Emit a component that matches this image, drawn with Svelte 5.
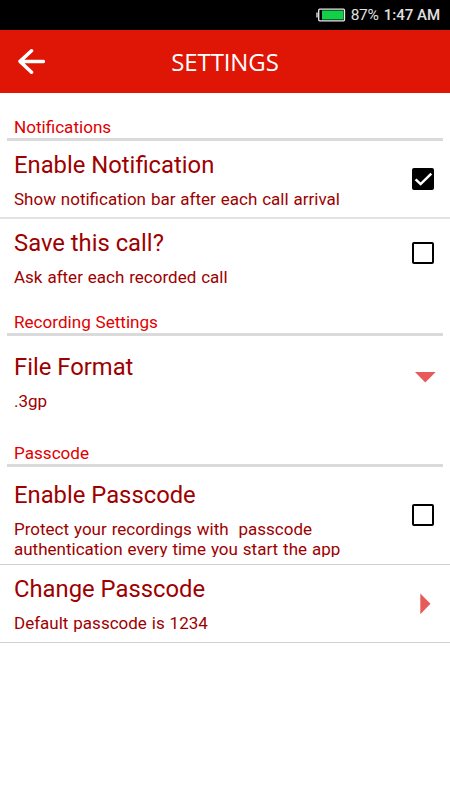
<script>
    let groups = $state([
        {
            name: 'Notifications',
            size: 'first',
            rows: [
                {title: 'Enable Notification', text: 'Show notification bar after each call arrival', kind: 'check', checked: true, size: 'line'},
                {title: 'Save this call?', text: 'Ask after each recorded call', kind: 'check', checked: false, size: 'plain'}
            ]
        },
        {
            name: 'Recording Settings',
            size: 'second',
            rows: [
                {title: 'File Format', text: '.3gp', kind: 'down', size: 'format'}
            ]
        },
        {
            name: 'Passcode',
            size: 'third',
            rows: [
                {title: 'Enable Passcode', text: 'Protect your recordings with  passcode\nauthentication every time you start the app', kind: 'check', checked: false, size: 'tall'},
                {title: 'Change Passcode', text: 'Default passcode is 1234', kind: 'right', size: 'last'}
            ]
        }
    ])
</script>

<main>
    <div class="status">
        <svg class="battery" width="30" height="14" viewBox="0 0 30 14">
            <path d="M1 4.5v5" stroke="#ddd" stroke-width="1.4" />
            <rect x="2.7" y="1.2" width="25.8" height="11.6" rx="1" fill="#000" stroke="#eee" stroke-width="1.3" />
            <rect x="6" y="2.5" width="21.5" height="9" fill="#13cf4a" />
        </svg>
        <span class="percent">87%</span>
        <span class="time">1:47 AM</span>
    </div>

    <header>
        <button class="back" aria-label="back">
            <svg width="28" height="28" viewBox="0 0 28 28">
                <path d="M26.3 13.4H3M14.5 2.8L3 13.4l11.5 10.8" fill="none" stroke="#fff" stroke-width="3.5" stroke-linecap="round" stroke-linejoin="round" />
            </svg>
        </button>
        <h1>SETTINGS</h1>
    </header>

    {#each groups as group}
        <h2 class={group.size}>{group.name}</h2>
        {#each group.rows as row}
            <div class="row {row.size}">
                <div class="info">
                    <h3>{row.title}</h3>
                    <p>{row.text}</p>
                </div>
                {#if row.kind === 'check'}
                    <button class="check" class:checked={row.checked} aria-label={row.title} onclick={() => row.checked = !row.checked}>
                        {#if row.checked}
                            <svg width="23" height="23" viewBox="0 0 23 23">
                                <path d="M3.6 11.3l5 4.8L19.3 5.6" fill="none" stroke="#fff" stroke-width="2.5" />
                            </svg>
                        {/if}
                    </button>
                {:else if row.kind === 'down'}
                    <svg class="arrow" width="22" height="22" viewBox="0 0 22 22">
                        <path d="M1 6h20.7L11.3 16.5z" fill="#e85a5a" />
                    </svg>
                {:else}
                    <svg class="arrow" width="22" height="22" viewBox="0 0 22 22">
                        <path d="M6.3 .4v20.8L16.5 10.8z" fill="#e85a5a" />
                    </svg>
                {/if}
            </div>
        {/each}
    {/each}
</main>

<style>
    :global(body){
        margin: 0;
        background: #fff;
    }

    main{
        height: 800px;
        overflow: hidden;
        background: #fff;
        font-family: Roboto, sans-serif;
    }

    h1, h2, h3, p{
        margin: 0;
        font-weight: 400;
    }

    button{
        padding: 0;
        border: 0;
        background: none;
    }

    svg{
        display: block;
    }

    .status{
        display: flex;
        align-items: center;
        justify-content: flex-end;
        box-sizing: border-box;
        height: 30px;
        padding-right: 10px;
        background: #000;
        color: #e0e0e0;
        font-size: 15px;
        line-height: 32px;
        white-space: nowrap;
    }

    .battery{
        margin-right: 5px;
    }

    .percent{
        width: 33px;
        font-size: 15.5px;
        letter-spacing: -0.3px;
    }

    .time{
        font-weight: 500;
    }

    header{
        display: grid;
        grid-template-columns: 60px 1fr 60px;
        align-items: center;
        height: 63px;
        background: #df1505;
    }

    .back{
        padding-left: 17px;
    }

    h1{
        color: #fff;
        font-family: 'Open Sans', sans-serif;
        font-size: 24px;
        line-height: 32px;
        text-align: center;
        letter-spacing: -0.1px;
    }

    h2{
        display: flex;
        align-items: flex-end;
        box-sizing: border-box;
        margin: 0 7px;
        padding: 0 7px 1px;
        border-bottom: 3px solid #dadada;
        color: #df0000;
        font-size: 17.1px;
        line-height: 20px;
        word-spacing: 0.5px;
    }

    .first{
        height: 48px;
    }

    .second{
        height: 39px;
    }

    .third{
        height: 41px;
    }

    .row{
        display: flex;
        justify-content: space-between;
        box-sizing: border-box;
        height: 78px;
        padding: 10px 14px 0;
    }

    .line{
        border-bottom: 2px solid #e2e2e2;
    }

    .format{
        height: 90px;
        padding-top: 17px;
    }

    .tall{
        height: 98px;
        padding-top: 14px;
        border-bottom: 1px solid #d0d0d0;
    }

    .last{
        border-bottom: 1px solid #d0d0d0;
    }

    .info{
        color: #9e0000;
    }

    h3{
        font-size: 23.8px;
        line-height: 29px;
    }

    p{
        margin-top: 9px;
        font-size: 17px;
        line-height: 20px;
        white-space: pre;
        word-spacing: 0.7px;
    }

    /* the second line loses its descenders at the edge of the box */
    .tall p{
        height: 38px;
        overflow: hidden;
    }

    .check{
        box-sizing: border-box;
        width: 22px;
        height: 22px;
        margin: 17px 2px 0 0;
        border: 2px solid #000;
        border-radius: 2px;
    }

    .plain .check{
        margin-top: 13px;
    }

    .tall .check{
        margin-top: 23px;
    }

    .checked{
        background: #000;
    }

    .check svg{
        margin: -2px;
    }

    .arrow{
        margin-top: 13px;
    }

    .last .arrow{
        margin-top: 18px;
    }
</style>
